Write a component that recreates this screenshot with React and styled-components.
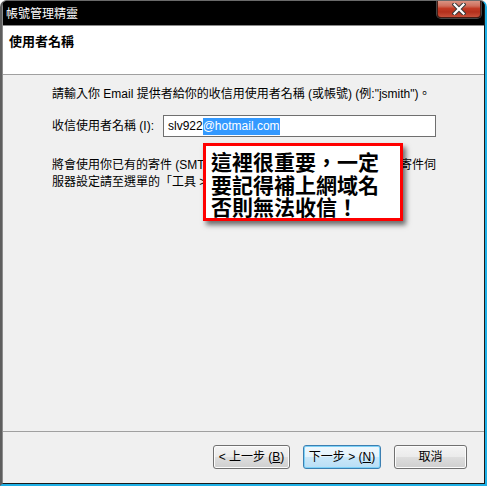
import React from "react";
import styled, { createGlobalStyle } from "styled-components";

const Global = createGlobalStyle`
  html, body { margin: 0; padding: 0; background: #ffffff; }
  body { font-family: "Liberation Sans", "Noto Sans CJK TC", sans-serif; font-size: 12px; }
`;

const Frame = styled.div`
  width: 487px;
  height: 486px;
  box-sizing: border-box;
  display: flex;
  flex-direction: column;
  background: #000;
  border-top: 1px solid #6a6a6a;
  border-left: 2px solid #5e5e5e;
  border-right: 2px solid #1eb0e6;
  border-bottom: 2px solid #1eb0e6;
  border-radius: 7px 7px 0 0;
  overflow: hidden;
`;

const Inner = styled.div`
  flex: 1;
  display: flex;
  flex-direction: column;
  border-left: 1px solid #8c8c8c;
  border-right: 1px solid #1a1a1a;
  border-bottom: 1px solid #1a1a1a;
  min-height: 0;
`;

const TitleBar = styled.div`
  position: relative;
  height: 24px;
  flex: none;
  background: #000;
  border-bottom: 1px solid #8a8a8a;
  display: flex;
  align-items: center;
  padding-left: 3px;
  color: #fff;
  font-family: "Noto Sans CJK TC", sans-serif;
  font-size: 12px;
  line-height: 16px;
`;

const CloseButton = styled.div`
  position: absolute;
  top: -1px;
  right: 3px;
  width: 44px;
  height: 18px;
  box-sizing: border-box;
  border: 1px solid #4a1d14;
  border-top: none;
  border-radius: 0 0 4px 4px;
  background: linear-gradient(
    to bottom,
    #dc9a8a 0%,
    #cf6f5c 35%,
    #c23a24 50%,
    #b3301c 70%,
    #c8503a 100%
  );
  box-shadow: 0 0 0 1px rgba(200, 200, 200, 0.35);
  display: flex;
  align-items: center;
  justify-content: center;
`;

const Header = styled.div`
  flex: none;
  height: 49px;
  background: #fff;
  border-bottom: 1px solid #a0a0a0;
  padding: 7px 0 0 6px;
  box-sizing: border-box;
`;

const HeaderTitle = styled.div`
  font-family: "Noto Sans CJK TC", sans-serif;
  font-weight: 700;
  font-size: 13px;
  line-height: 16px;
  color: #000;
`;

const Content = styled.div`
  position: relative;
  flex: 1;
  background: #f0f0f0;
  padding: 11px 0 0 49px;
  box-sizing: border-box;
  color: #000;
`;

const Line = styled.div`
  line-height: 16px;
  white-space: nowrap;
`;

const FieldRow = styled.div`
  display: flex;
  align-items: center;
  margin-top: 13px;
`;

const Label = styled.div`
  width: 111px;
  flex: none;
  line-height: 16px;
  white-space: nowrap;
`;

const FakeInput = styled.div`
  width: 273px;
  height: 22px;
  box-sizing: border-box;
  border: 1px solid #6f6f6f;
  background: #fff;
  display: flex;
  align-items: center;
  padding-left: 4px;
  white-space: nowrap;
`;

const Selected = styled.span`
  background: #3399ff;
  color: #fff;
  line-height: 17px;
  display: inline-block;
`;

const Paragraph = styled.div`
  margin-top: 20px;
  line-height: 17px;
  white-space: nowrap;
`;

const Callout = styled.div`
  position: absolute;
  left: 200px;
  top: 68px;
  width: 200px;
  height: 78px;
  box-sizing: border-box;
  border: 3px solid #ff0000;
  background: #fff;
  box-shadow: 3px 4px 5px rgba(0, 0, 0, 0.55);
  padding: 4px 0 0 5px;
  font-family: "Noto Sans CJK TC", sans-serif;
  font-weight: 700;
  font-size: 21px;
  line-height: 22.5px;
  color: #000;
  white-space: nowrap;
`;

const Footer = styled.div`
  flex: none;
  height: 52px;
  box-sizing: border-box;
  background: #f0f0f0;
  border-top: 1px solid #a0a0a0;
  display: flex;
  justify-content: flex-end;
  align-items: flex-start;
  gap: 13px;
  padding: 13px 17px 0 0;
`;

const Button = styled.div`
  width: ${(p) => p.$w}px;
  height: 24px;
  box-sizing: border-box;
  border: 1px solid ${(p) => (p.$default ? "#3c7fb1" : "#707070")};
  border-radius: 3px;
  background: ${(p) =>
    p.$default
      ? "linear-gradient(to bottom, #f0f8fd 0%, #e4f3fc 48%, #c9e7f9 52%, #b9def5 100%)"
      : "linear-gradient(to bottom, #f4f4f4 0%, #ebebeb 48%, #dddddd 52%, #cfcfcf 100%)"};
  box-shadow: inset 0 0 0 1px ${(p) => (p.$default ? "#7ed2f8" : "#fcfcfc")};
  display: flex;
  align-items: center;
  justify-content: center;
  font-size: 12px;
  line-height: 16px;
  color: #000;
  white-space: nowrap;
  u { text-decoration: underline; }
`;

export default function App() {
  return (
    <>
      <Global />
      <Frame>
        <Inner>
          <TitleBar>
            帳號管理精靈
            <CloseButton>
              <svg width="14" height="12" viewBox="0 0 14 12">
                <path d="M2.5 1.5 L11.5 10.5 M11.5 1.5 L2.5 10.5" stroke="#3a3a3a" strokeWidth="4.2" strokeLinecap="square" />
                <path d="M2.5 1.5 L11.5 10.5 M11.5 1.5 L2.5 10.5" stroke="#ffffff" strokeWidth="2.2" strokeLinecap="square" />
              </svg>
            </CloseButton>
          </TitleBar>
          <Header>
            <HeaderTitle>使用者名稱</HeaderTitle>
          </Header>
          <Content>
            <Line>請輸入你 Email 提供者給你的收信用使用者名稱 (或帳號) (例:"jsmith")。</Line>
            <FieldRow>
              <Label>收信使用者名稱 (I):</Label>
              <FakeInput>
                slv922<Selected>@hotmail.com</Selected>
              </FakeInput>
            </FieldRow>
            <Paragraph>
              將會使用你已有的寄件 (SMTP) 伺服器來傳送你的郵件。如要變更寄件伺
              <br />
              服器設定請至選單的「工具 &gt; 帳號」。
            </Paragraph>
            <Callout>
              這裡很重要，一定
              <br />
              要記得補上網域名
              <br />
              否則無法收信！
            </Callout>
          </Content>
          <Footer>
            <Button $w={77}>
              &lt; 上一步 (<u>B</u>)
            </Button>
            <Button $w={78} $default>
              下一步 &gt; (<u>N</u>)
            </Button>
            <Button $w={73}>取消</Button>
          </Footer>
        </Inner>
      </Frame>
    </>
  );
}
